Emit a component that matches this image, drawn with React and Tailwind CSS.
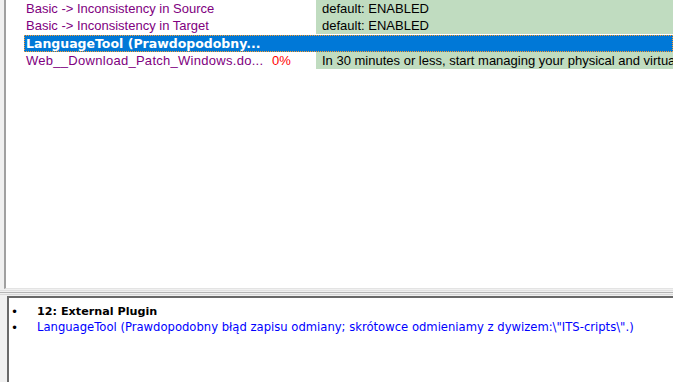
import React from 'react';

const rows = [
  { name: 'Basic -> Inconsistency in Source', value: 'default: ENABLED' },
  { name: 'Basic -> Inconsistency in Target', value: 'default: ENABLED' },
  { name: 'LanguageTool (Prawdopodobny...', value: '', selected: true },
  { name: 'Web__Download_Patch_Windows.do...', pct: '0%', value: 'In 30 minutes or less, start managing your physical and virtual servers' },
];

const App = () => {
  return (
    <div className="w-[673px] h-[382px] overflow-hidden bg-[#f0f0f0] flex flex-col" style={{ fontFamily: '"Liberation Sans", Arial, sans-serif' }}>
      {/* Top list */}
      <div className="h-[289px] ml-[4px] border-l-2 border-b border-l-[#a0a0a0] border-b-[#e3e3e3] bg-white flex flex-col overflow-hidden">
        {rows.map((row) =>
          row.selected ? (
            <div key={row.name} className="h-[17px] mt-[1px] ml-[18px] bg-[#0078d7] outline-1 outline-dotted outline-[#ff9c2a] -outline-offset-1 flex items-center">
              <span className="pl-[2px] text-white font-bold text-[12.5px] leading-[17px] whitespace-nowrap" style={{ fontFamily: '"DejaVu Sans", Tahoma, sans-serif' }}>{row.name}</span>
            </div>
          ) : (
            <div key={row.name} className="h-[17px] ml-[18px] flex text-[13px] leading-[17px] whitespace-nowrap">
              <div className="w-[292px] shrink-0 flex pl-[2px]">
                {row.pct ? (
                  <>
                    <span className="w-[246px] text-[#800080] tracking-[0.28px]">{row.name}</span>
                    <span className="text-[#ff0000]">{row.pct}</span>
                  </>
                ) : (
                  <span className="text-[#800080]">{row.name}</span>
                )}
              </div>
              <div className="flex-1 bg-[#c0dcc0] pl-[6px] text-black overflow-hidden">{row.value}</div>
            </div>
          )
        )}
      </div>

      {/* Splitter */}
      <div className="h-[7px] flex flex-col">
        <div className="h-[1px] mt-[1px] bg-[#e0e0e0]" />
        <div className="h-[1px] mt-[1px] bg-[#b4b4b4]" />
        <div className="h-[1px] mt-[1px] bg-[#d8d8d8]" />
      </div>

      {/* Bottom detail */}
      <div className="flex-1 ml-[7px] border-l-2 border-t-2 border-l-[#696969] border-t-[#696969] bg-white pt-[6px]" style={{ fontFamily: '"DejaVu Sans", Tahoma, sans-serif' }}>
        <div className="flex items-center h-[16px] whitespace-nowrap">
          <span className="w-[28px] pl-[2px] text-black text-[12px]">•</span>
          <span className="font-bold text-black text-[11.2px]">12: External Plugin</span>
        </div>
        <div className="flex items-center h-[16px] whitespace-nowrap">
          <span className="w-[28px] pl-[2px] text-black text-[12px]">•</span>
          <span className="text-[#0000ff] text-[11.6px]">LanguageTool (Prawdopodobny błąd zapisu odmiany; skrótowce odmieniamy z dywizem:\"ITS-cripts\".)</span>
        </div>
      </div>
    </div>
  );
};

export default App;
